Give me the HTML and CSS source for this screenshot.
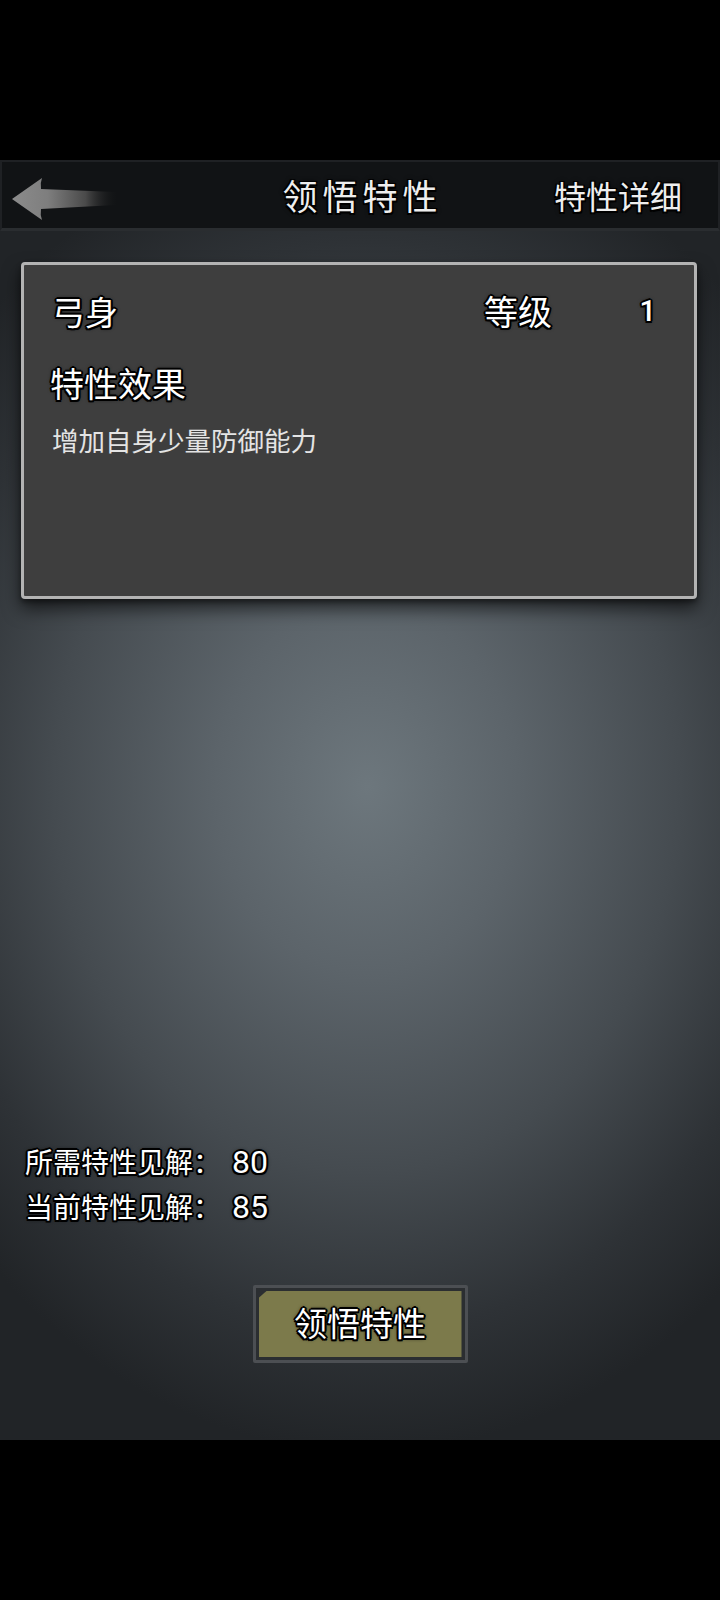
FILE: index.html
```html
<!DOCTYPE html>
<html lang="zh-CN">
<head>
<meta charset="utf-8">
<title>领悟特性</title>
<link rel="stylesheet" href="styles.css">
</head>
<body>
<div class="screen">
  <div class="top-band"></div>
  <header class="header">
    <div class="back">
      <svg class="back-arrow" width="120" height="60" viewBox="0 0 120 60">
        <defs>
          <linearGradient id="ag" x1="10" y1="0" x2="118" y2="0" gradientUnits="userSpaceOnUse">
            <stop offset="0" stop-color="#8c8c8c"/>
            <stop offset="0.35" stop-color="#7e7e7e"/>
            <stop offset="0.7" stop-color="#4a4a4a"/>
            <stop offset="1" stop-color="#151617" stop-opacity="0"/>
          </linearGradient>
        </defs>
        <path d="M12 34 L42 13 Q40 18 41 24 L116 27 L116 40 L41 44 Q40 50 42 55 Z" fill="url(#ag)"/>
      </svg>
    </div>
    <div class="title">领悟特性</div>
    <div class="detail">特性详细</div>
  </header>
  <main class="main">
    <section class="card">
      <div class="card-row">
        <span class="outlined name">弓身</span>
        <span class="outlined level-label">等级</span>
        <span class="outlined level-val">1</span>
      </div>
      <div class="outlined effect-title">特性效果</div>
      <div class="effect-desc">增加自身少量防御能力</div>
    </section>
    <div class="spacer"></div>
    <div class="info">
      <div class="outlined info-line">所需特性见解：<span class="num">80</span></div>
      <div class="outlined info-line">当前特性见解：<span class="num">85</span></div>
    </div>
    <div class="btn-wrap">
      <div class="btn">
        <div class="btn-inner"><span class="outlined btn-text">领悟特性</span></div>
      </div>
    </div>
  </main>
  <div class="bottom-band"></div>
</div>
</body>
</html>
```

FILE: styles.css
```css
* { box-sizing: border-box; }
html, body {
  margin: 0;
  padding: 0;
  background: #000;
}
body {
  font-family: "Noto Sans CJK SC", "Noto Sans", sans-serif;
  color: #fff;
}
.screen {
  width: 720px;
  height: 1600px;
  display: flex;
  flex-direction: column;
  background: #000;
}
.top-band { height: 160px; background: #000; }
.bottom-band { height: 160px; background: #000; }

.outlined {
  color: #fff;
  text-shadow:
    -1.5px -1.5px 0 #000, 1.5px -1.5px 0 #000,
    -1.5px 1.5px 0 #000, 1.5px 1.5px 0 #000,
    0 -2px 0 #000, 0 2px 0 #000,
    -2px 0 0 #000, 2px 0 0 #000,
    0 0 4px #000;
}

.header {
  height: 71px;
  background: #111315;
  border: 2px solid #1f2124;
  border-bottom: 3px solid #2a2d30;
  display: grid;
  grid-template-columns: 1fr auto 1fr;
  align-items: center;
}
.back { display: flex; align-items: center; height: 100%; }
.back-arrow { display: block; margin-left: -2px; }
.title {
  font-size: 35px;
  font-weight: 400;
  letter-spacing: 5px;
  padding-left: 5px;
  line-height: 40px;
  color: #eeeeee;
  text-shadow:
    -1.5px -1.5px 0 #000, 1.5px -1.5px 0 #000,
    -1.5px 1.5px 0 #000, 1.5px 1.5px 0 #000,
    0 0 5px #000;
}
.detail {
  justify-self: end;
  padding-right: 36px;
  font-size: 32px;
  line-height: 40px;
  color: #eeeeee;
  text-shadow:
    -1.5px -1.5px 0 #000, 1.5px -1.5px 0 #000,
    -1.5px 1.5px 0 #000, 1.5px 1.5px 0 #000,
    0 0 5px #000;
}

.main {
  flex: 1;
  display: flex;
  flex-direction: column;
  padding: 31px 0 77px;
  background:
    radial-gradient(ellipse 75% 55% at 51% 46%, #6d777d 0%, #5c646a 28%, #454b50 58%, #2e3236 82%, #212427 100%);
}

.card {
  margin: 0 23px 0 21px;
  height: 337px;
  background: #3e3e3e;
  border: 3px solid #b3b3b3;
  border-radius: 4px;
  box-shadow: 0 10px 18px rgba(0, 0, 0, 0.6), 0 3px 5px rgba(0,0,0,0.4);
  padding: 26px 0 0 28px;
}
.card-row {
  display: grid;
  grid-template-columns: 1fr auto 142px;
  align-items: center;
  height: 40px;
}
.name { font-size: 33px; line-height: 40px; }
.level-label { font-size: 34px; line-height: 40px; }
.level-val {
  font-size: 29px;
  line-height: 40px;
  text-align: right;
  justify-self: end;
  margin-right: 38px;
  font-family: "Roboto", "Noto Sans", sans-serif;
  font-weight: 500;
}
.effect-title {
  margin-top: 32px;
  font-size: 34px;
  line-height: 40px;
  margin-left: -2px;
}
.effect-desc {
  margin-top: 20px;
  font-size: 26.5px;
  line-height: 34px;
  color: #e4e4e4;
}

.spacer { flex: 1; }

.info {
  padding-left: 25px;
  display: flex;
  flex-direction: column;
}
.info-line {
  font-size: 28px;
  line-height: 44px;
}
.num {
  font-family: "Roboto", "Noto Sans", sans-serif;
  font-size: 32px;
  margin-left: 11px;
}

.btn-wrap {
  display: flex;
  justify-content: center;
  margin-top: 56px;
}
.btn {
  width: 215px;
  height: 78px;
  border: 3px solid #4c4f53;
  background: #2b2e31;
  padding: 3px;
  border-radius: 2px;
}
.btn-inner {
  width: 100%;
  height: 100%;
  background: #7c7a4b;
  clip-path: polygon(8px 0, 100% 0, 100% 100%, 0 100%, 0 7px);
  display: flex;
  align-items: center;
  justify-content: center;
}
.btn-text {
  font-size: 33px;
  line-height: 40px;
  margin-top: -4px;
}
```
